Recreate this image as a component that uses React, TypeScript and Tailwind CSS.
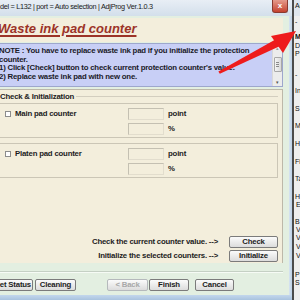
import { ReactNode } from "react";

// small win7 style button
const Btn = ({ children, className = "", disabled = false }: { children: ReactNode; className?: string; disabled?: boolean }) => (
    <div
        className={`flex h-[12px] shrink-0 items-center justify-center rounded-[2px] border bg-linear-to-b from-[#fbfbfb] to-[#dcdcdc] text-[7.8px] font-bold leading-none tracking-[-0.2px] ${disabled ? "border-[#b5b9bc] text-[#a8a8a8]" : "border-[#7b7b7b] text-[#1c1c1c]"} ${className}`}
    >
        {children}
    </div>
);

const CounterBox = ({ label, className = "" }: { label: string; className?: string }) => (
    <div className={`flex h-[35px] border-y border-r border-[#cbc6b6] pt-[4px] ${className}`}>
        <div className="flex h-[12px] items-center">
            <div className="ml-[5px] h-[6px] w-[6px] border border-[#8c8c8c] bg-white" />
            <span className="ml-[4px] w-[113px] text-[7.8px] font-bold tracking-[-0.2px]">{label}</span>
        </div>
        <div className="flex w-[36px] flex-col gap-[3px]">
            <div className="h-[12px] border border-[#c4c0b2] border-b-[#e2ddcd] border-r-[#e2ddcd]" />
            <div className="h-[12px] border border-[#c4c0b2] border-b-[#e2ddcd] border-r-[#e2ddcd]" />
        </div>
        <div className="ml-[4px] flex flex-col gap-[3px] text-[7.8px] font-bold tracking-[-0.2px]">
            <div className="flex h-[12px] items-center">point</div>
            <div className="flex h-[12px] items-center">%</div>
        </div>
    </div>
);

// the other window peeking in on the right edge
const sideLines = [
    { t: "-", c: "mt-[2px]" },
    { t: "M", c: "mt-[7px] font-bold" },
    { t: "D", c: "mt-[1px]" },
    { t: "P", c: "mt-[0px]" },
    { t: "-", c: "mt-[13px]" },
    { t: "In", c: "mt-[8px]" },
    { t: "S", c: "mt-[10px]" },
    { t: "M", c: "mt-[9px]" },
    { t: "H", c: "mt-[10px]" },
    { t: "Fi", c: "mt-[10px]" },
    { t: "Ta", c: "mt-[9px]" },
    { t: "H", c: "mt-[10px]" },
    { t: "E", c: "mt-[0px] pl-[2px]" },
    { t: "B", c: "mt-[9px]" },
    { t: "V", c: "mt-[0px] pl-[2px]" },
    { t: "V", c: "mt-[0px] pl-[2px]" },
    { t: "V", c: "mt-[1px] pl-[2px]" },
    { t: "V", c: "mt-[1px] pl-[2px]" },
    { t: "P", c: "mt-[11px]" },
    { t: "S", c: "mt-[0px]" },
];

export default function App() {
    return (
        <div className="relative flex h-[300px] w-[300px] overflow-hidden bg-[#5a5a5a] font-['Liberation_Sans',Arial,sans-serif] text-[#1c1c1c]">
            {/* dialog */}
            <div className="flex w-[292px] shrink-0 flex-col">
                {/* title bar */}
                <div className="flex h-[16px] items-start bg-linear-to-b from-[#e8eef5] to-[#d3dfeb]">
                    <span className="mt-[2px] whitespace-nowrap text-[7.3px] leading-[9px] tracking-[-0.3px] text-[#202020]">
                        del = L132 | port = Auto selection | AdjProg Ver.1.0.3
                    </span>
                    <div className="ml-auto mr-[4px] flex h-[13px] w-[16px] items-center justify-center rounded-b-[3px] border border-t-0 border-[#8a3a30] bg-linear-to-b from-[#e49a8c] to-[#c4402e] text-[8px] font-bold leading-none text-white">
                        x
                    </div>
                </div>

                <div className="flex flex-1">
                    <div className="flex h-[279px] flex-1 flex-col bg-[#e3efe1] pt-[2px] pr-[6px]">
                        {/* header */}
                        <div className="h-[24px] bg-[#f3eedc]">
                            <div className="-ml-[2px] pt-[3px] text-[13px] font-bold italic leading-[16px] text-[#9c3328] underline decoration-[1.5px] underline-offset-[2px]">
                                Waste ink pad counter
                            </div>
                        </div>

                        {/* note */}
                        <div className="mt-[1px] flex h-[44px] border-y border-r border-[#9ea7cc] bg-[#c8cff6]">
                            <div className="flex-1 whitespace-nowrap pt-[3px] -ml-[1px] text-[7.8px] font-bold leading-[8.7px] tracking-[-0.2px] text-[#1a1a28]">
                                NOTE : You have to replace waste ink pad if you initialize the protection
                                <br />
                                counter.
                                <br />
                                1) Click [Check] button to check current protection counter's value.
                                <br />
                                2) Replace waste ink pad with new one.
                            </div>
                            <div className="flex w-[10px] flex-col items-center bg-[#ececec] border-l border-[#d8d8d8]">
                                <div className="mt-[1px] text-[5px] leading-[6px] text-[#9a9a9a]">▴</div>
                                <div className="mt-[6px] flex h-[15px] w-[8px] flex-col items-center justify-center gap-[1px] rounded-[1px] border border-[#a8a8a8] bg-linear-to-r from-[#f4f4f4] to-[#dadada]">
                                    <div className="h-px w-[3px] bg-[#8a8a8a]" />
                                    <div className="h-px w-[3px] bg-[#8a8a8a]" />
                                    <div className="h-px w-[3px] bg-[#8a8a8a]" />
                                </div>
                                <div className="mt-auto mb-[1px] text-[5px] leading-[6px] text-[#555]">▾</div>
                            </div>
                        </div>

                        {/* check & initialization */}
                        <div className="mt-[2px] flex h-[174px] flex-col border-t border-r border-[#bdb8a9] bg-[#f3eedc] pr-[4px]">
                            <div className="mt-[2px] flex h-[9px] items-center">
                                <span className="whitespace-nowrap text-[7.8px] font-bold tracking-[-0.2px]">Check &amp; Initialization</span>
                                <div className="ml-[2px] h-px flex-1 bg-[#d3cebf]" />
                            </div>
                            <CounterBox label="Main pad counter" className="mt-[2px]" />
                            <CounterBox label="Platen pad counter" className="mt-[5px]" />

                            <div className="mt-auto flex flex-col gap-[2px] pb-[1px]">
                                <div className="flex items-center justify-end">
                                    <span className="whitespace-nowrap text-[7.8px] font-bold tracking-[-0.2px]">Check the current counter value. --&gt;</span>
                                    <Btn className="ml-[11px] w-[49px]">Check</Btn>
                                </div>
                                <div className="flex items-center justify-end">
                                    <span className="whitespace-nowrap text-[7.8px] font-bold tracking-[-0.2px]">Initialize the selected counters. --&gt;</span>
                                    <Btn className="ml-[11px] w-[49px]">Initialize</Btn>
                                </div>
                            </div>
                        </div>

                        {/* separator */}
                        <div className="mt-[8px] h-px bg-[#c5d0c4]" />
                        <div className="h-px bg-[#f6fbf5]" />

                        {/* wizard buttons */}
                        <div className="mt-[6px] flex">
                            <Btn className="-ml-[8px] h-[11px] w-[41px]">Get Status</Btn>
                            <Btn className="ml-[2px] h-[11px] w-[41px]">Cleaning</Btn>
                            <Btn className="ml-[31px] h-[11px] w-[41px]" disabled>&lt; Back</Btn>
                            <Btn className="ml-[1px] h-[11px] w-[40px]">Finish</Btn>
                            <Btn className="ml-[6px] h-[11px] w-[39px]">Cancel</Btn>
                        </div>
                    </div>
                    <div className="w-[3px] bg-linear-to-r from-[#d7e4f1] to-[#bcd0e6]" />
                </div>
                <div className="h-[5px] bg-linear-to-b from-[#c3d7ec] to-[#a9c3df]" />
            </div>

            {/* window edge shadow */}
            <div className="w-[2px] shrink-0 bg-[#4b4b4b]" />

            {/* neighbour window */}
            <div className="flex w-[6px] shrink-0 flex-col bg-[#eeeeee] text-[7px] leading-[8px] text-[#111]">
                <div className="h-[16px] bg-[#dfe6ee] pt-[2px] pl-[1px] whitespace-nowrap">Ad</div>
                {sideLines.map((l, i) => (
                    <div key={i} className={`h-[8px] pl-[1px] whitespace-nowrap ${l.c}`}>
                        {l.t}
                    </div>
                ))}
            </div>

            {/* red arrow overlay */}
            <svg className="pointer-events-none absolute inset-0" width="300" height="300" viewBox="0 0 300 300">
                <polygon points="219.8,73.8 218.4,71.4 275.4,39.4 279.6,46.2" fill="#ee1c1c" />
                <polygon points="296,31 271,36 283,53" fill="#ee1c1c" />
            </svg>
        </div>
    );
}
